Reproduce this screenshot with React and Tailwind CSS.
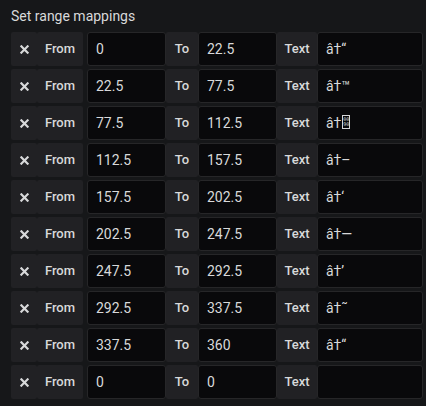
import React from 'react';

const HexBox = () => (
  <span className="inline-flex flex-col items-center justify-center align-middle w-[8px] h-[14px] border border-[#d8d9da] text-[5px] leading-[5px] font-['DejaVu_Sans_Mono',monospace] ml-[1px] -mt-[2px]">
    <span>00</span>
    <span>90</span>
  </span>
);

const mappings = [
  { from: '0', to: '22.5', text: 'â†“' },
  { from: '22.5', to: '77.5', text: 'â†™' },
  { from: '77.5', to: '112.5', text: 'â†', hex: true },
  { from: '112.5', to: '157.5', text: 'â†–' },
  { from: '157.5', to: '202.5', text: 'â†‘' },
  { from: '202.5', to: '247.5', text: 'â†—' },
  { from: '247.5', to: '292.5', text: 'â†’' },
  { from: '292.5', to: '337.5', text: 'â†˜' },
  { from: '337.5', to: '360', text: 'â†“' },
  { from: '0', to: '0', text: '' },
];

const Label = ({ children, className = '' }) => (
  <div className={`flex items-center justify-center h-full bg-[#212124] rounded-[2px] text-[13px] font-medium text-[#d8d9da] ${className}`}>
    {children}
  </div>
);

const Field = ({ children, className = '' }) => (
  <div
    className={`flex items-center h-full bg-[#09090b] border border-[#262628] rounded-[3px] px-2 text-[14px] text-[#d8d9da] whitespace-pre ${className}`}
  >
    {children}
  </div>
);

const App = () => {
  return (
    <div className="w-[426px] h-[406px] bg-[#161719] font-['Roboto',sans-serif] pl-[11px] pr-[3px] pt-[8px]">
      <h6 className="text-[14px] text-[#d8d9da] leading-[17px] mb-[7px]">Set range mappings</h6>
      <div className="flex flex-col gap-[3px]">
        {mappings.map((m, i) => (
          <div key={i} className="flex h-[34px]">
            <Label className="w-[26px] shrink-0">
              <svg width="9" height="9" viewBox="0 0 10 10">
                <path d="M1.5 1.5 L8.5 8.5 M8.5 1.5 L1.5 8.5" stroke="#d8d9da" strokeWidth="2.4" strokeLinecap="square" />
              </svg>
            </Label>
            <Label className="w-[46px] shrink-0 mr-[4px]">From</Label>
            <Field className="w-[79px]">{m.from}</Field>
            <Label className="w-[32px] shrink-0">To</Label>
            <Field className="w-[79px]">{m.to}</Field>
            <Label className="w-[40px] shrink-0">Text</Label>
            <Field className="w-[106px]">
              {m.text}
              {m.hex && <HexBox />}
            </Field>
          </div>
        ))}
      </div>
    </div>
  );
};

export default App;
